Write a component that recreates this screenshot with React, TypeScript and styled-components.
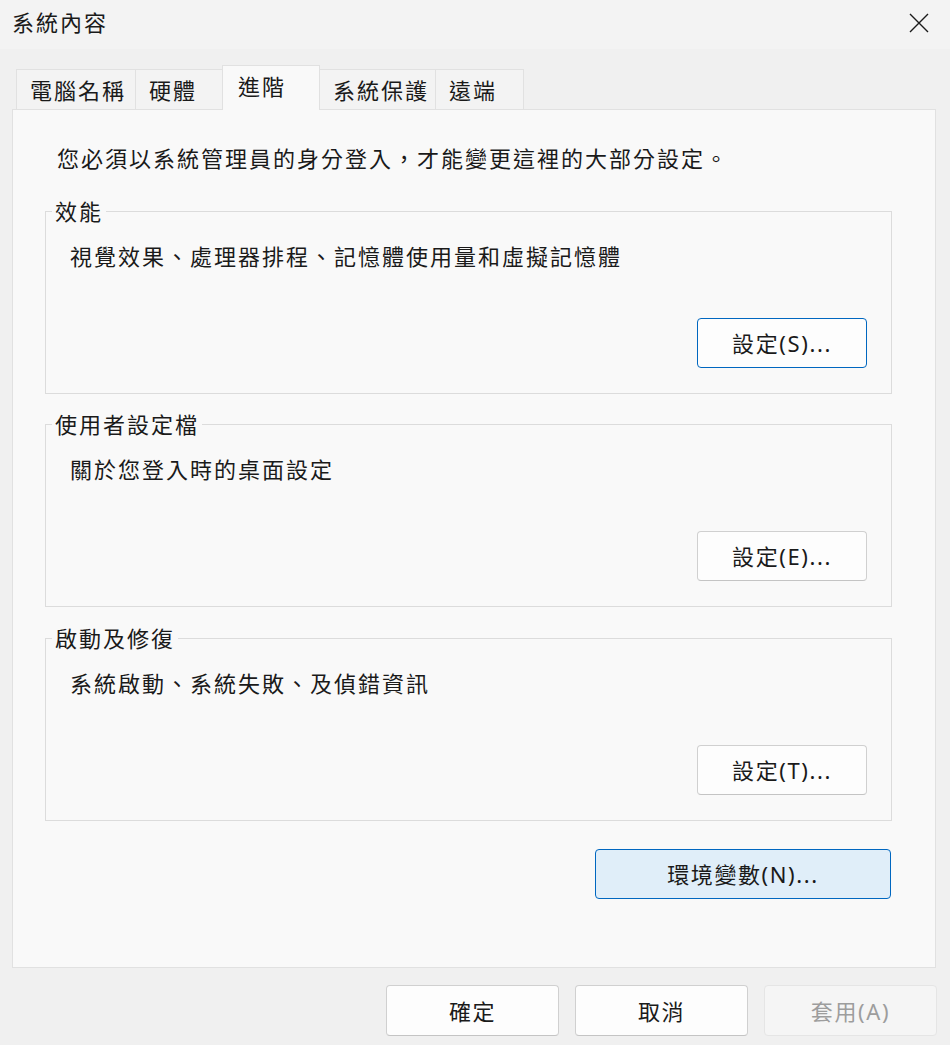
import React from "react";
import styled, { createGlobalStyle, css } from "styled-components";

const GlobalStyle = createGlobalStyle`
  html, body {
    margin: 0;
    padding: 0;
    background: #f0f0f0;
  }
  body {
    font-family: "Noto Sans", "Noto Sans CJK TC", sans-serif;
    color: #1a1a1a;
  }
  * { box-sizing: border-box; }
`;

const FONT = `"Noto Sans", "Noto Sans CJK TC", sans-serif`;

const Window = styled.div`
  width: 950px;
  height: 1045px;
  display: flex;
  flex-direction: column;
  background: #f0f0f0;
  font-family: ${FONT};
  font-size: 22px;
  letter-spacing: 2px;
  overflow: hidden;
`;

const TitleBar = styled.div`
  height: 49px;
  flex: none;
  display: flex;
  align-items: center;
  justify-content: space-between;
  padding: 0 21px 6px 12px;
  background: #f3f3f3;
`;

const TitleText = styled.div`
  font-size: 22px;
  line-height: 28px;
  color: #1a1a1a;
`;

const CloseButton = styled.button`
  width: 20px;
  height: 20px;
  padding: 0;
  border: 0;
  background: transparent;
  display: flex;
  align-items: center;
  justify-content: center;
  margin-top: 2px;
`;

const Body = styled.div`
  flex: none;
  display: flex;
  flex-direction: column;
  padding: 16px 14px 0 12px;
`;

const TabStrip = styled.div`
  display: flex;
  align-items: flex-end;
  padding-left: 4px;
  position: relative;
  z-index: 1;
`;

const Tab = styled.div<{ $w: number; $active?: boolean }>`
  width: ${(p) => p.$w}px;
  height: 40px;
  flex: none;
  display: flex;
  align-items: center;
  padding-left: 13px;
  padding-top: 1px;
  border: 1px solid #e1e1e1;
  border-bottom: 0;
  background: #f3f3f3;
  margin-left: -1px;
  line-height: 28px;
  white-space: nowrap;
  &:first-child { margin-left: 0; }
  ${(p) =>
    p.$active &&
    css`
      height: 45px;
      background: #f9f9f9;
      margin-bottom: -1px;
      padding-left: 15px;
      padding-top: 0;
      padding-bottom: 4px;
      position: relative;
      z-index: 2;
    `}
`;

const Panel = styled.div`
  height: 859px;
  flex: none;
  display: flex;
  flex-direction: column;
  background: #f9f9f9;
  border: 1px solid #e1e1e1;
  padding: 34px 43px 0 32px;
`;

const Intro = styled.div`
  line-height: 28px;
  margin-left: 12px;
`;

const Group = styled.fieldset<{ $mt: number }>`
  margin: ${(p) => p.$mt}px 0 0 0;
  padding: 0;
  border: 1px solid #dcdcdc;
  min-width: 0;
`;

const Legend = styled.legend`
  margin-left: 6px;
  padding: 0 3px;
  line-height: 28px;
  font-size: 22px;
`;

const GroupBody = styled.div`
  display: flex;
  flex-direction: column;
  padding: 17px 24px 25px 24px;
`;

const GroupText = styled.div`
  line-height: 28px;
`;

const Button = styled.button<{ $w: number; $variant?: "default" | "accent" | "disabled" }>`
  width: ${(p) => p.$w}px;
  height: 50px;
  flex: none;
  font-family: ${FONT};
  font-size: 22px;
  letter-spacing: 1.6px;
  color: #1a1a1a;
  background: #fdfdfd;
  border: 1px solid #d0d0d0;
  border-bottom-color: #c4c4c4;
  border-radius: 4px;
  padding: 0 0 2px 0;
  display: flex;
  align-items: center;
  justify-content: center;
  ${(p) =>
    p.$variant === "default" &&
    css`
      border: 1px solid #0067c0;
    `}
  ${(p) =>
    p.$variant === "accent" &&
    css`
      background: #e0eef9;
      border: 1px solid #0067c0;
    `}
  ${(p) =>
    p.$variant === "disabled" &&
    css`
      background: #f5f5f5;
      border: 1px solid #e5e5e5;
      color: #9d9d9d;
    `}
`;

const GroupButton = styled(Button)`
  align-self: flex-end;
  margin-top: 48px;
`;

const EnvButton = styled(Button)`
  align-self: flex-end;
  margin-top: 28px;
  margin-right: 1px;
`;

const Footer = styled.div`
  display: flex;
  justify-content: flex-end;
  gap: 16px;
  padding: 17px 13px 0 0;
`;

const FooterButton = styled(Button)`
  height: 51px;
`;

const CloseIcon = () => (
  <svg width="20" height="20" viewBox="0 0 20 20">
    <path d="M1 1 L19 19 M19 1 L1 19" stroke="#1a1a1a" strokeWidth="1.4" fill="none" />
  </svg>
);

const tabs = [
  { label: "電腦名稱", w: 120 },
  { label: "硬體", w: 88 },
  { label: "進階", w: 98, active: true },
  { label: "系統保護", w: 117 },
  { label: "遠端", w: 89 },
];

const groups = [
  { title: "效能", text: "視覺效果、處理器排程、記憶體使用量和虛擬記憶體", button: "設定(S)...", isDefault: true, mt: 25 },
  { title: "使用者設定檔", text: "關於您登入時的桌面設定", button: "設定(E)...", mt: 16 },
  { title: "啟動及修復", text: "系統啟動、系統失敗、及偵錯資訊", button: "設定(T)...", mt: 17 },
];

export default function App() {
  return (
    <>
      <GlobalStyle />
      <Window>
        <TitleBar>
          <TitleText>系統內容</TitleText>
          <CloseButton aria-label="關閉">
            <CloseIcon />
          </CloseButton>
        </TitleBar>
        <Body>
          <TabStrip>
            {tabs.map((t) => (
              <Tab key={t.label} $w={t.w} $active={t.active}>
                {t.label}
              </Tab>
            ))}
          </TabStrip>
          <Panel>
            <Intro>您必須以系統管理員的身分登入，才能變更這裡的大部分設定。</Intro>
            {groups.map((g) => (
              <Group key={g.title} $mt={g.mt}>
                <Legend>{g.title}</Legend>
                <GroupBody>
                  <GroupText>{g.text}</GroupText>
                  <GroupButton $w={170} $variant={g.isDefault ? "default" : undefined}>
                    {g.button}
                  </GroupButton>
                </GroupBody>
              </Group>
            ))}
            <EnvButton $w={296} $variant="accent">環境變數(N)...</EnvButton>
          </Panel>
        </Body>
        <Footer>
          <FooterButton $w={173}>確定</FooterButton>
          <FooterButton $w={173}>取消</FooterButton>
          <FooterButton $w={173} $variant="disabled">套用(A)</FooterButton>
        </Footer>
      </Window>
    </>
  );
}
